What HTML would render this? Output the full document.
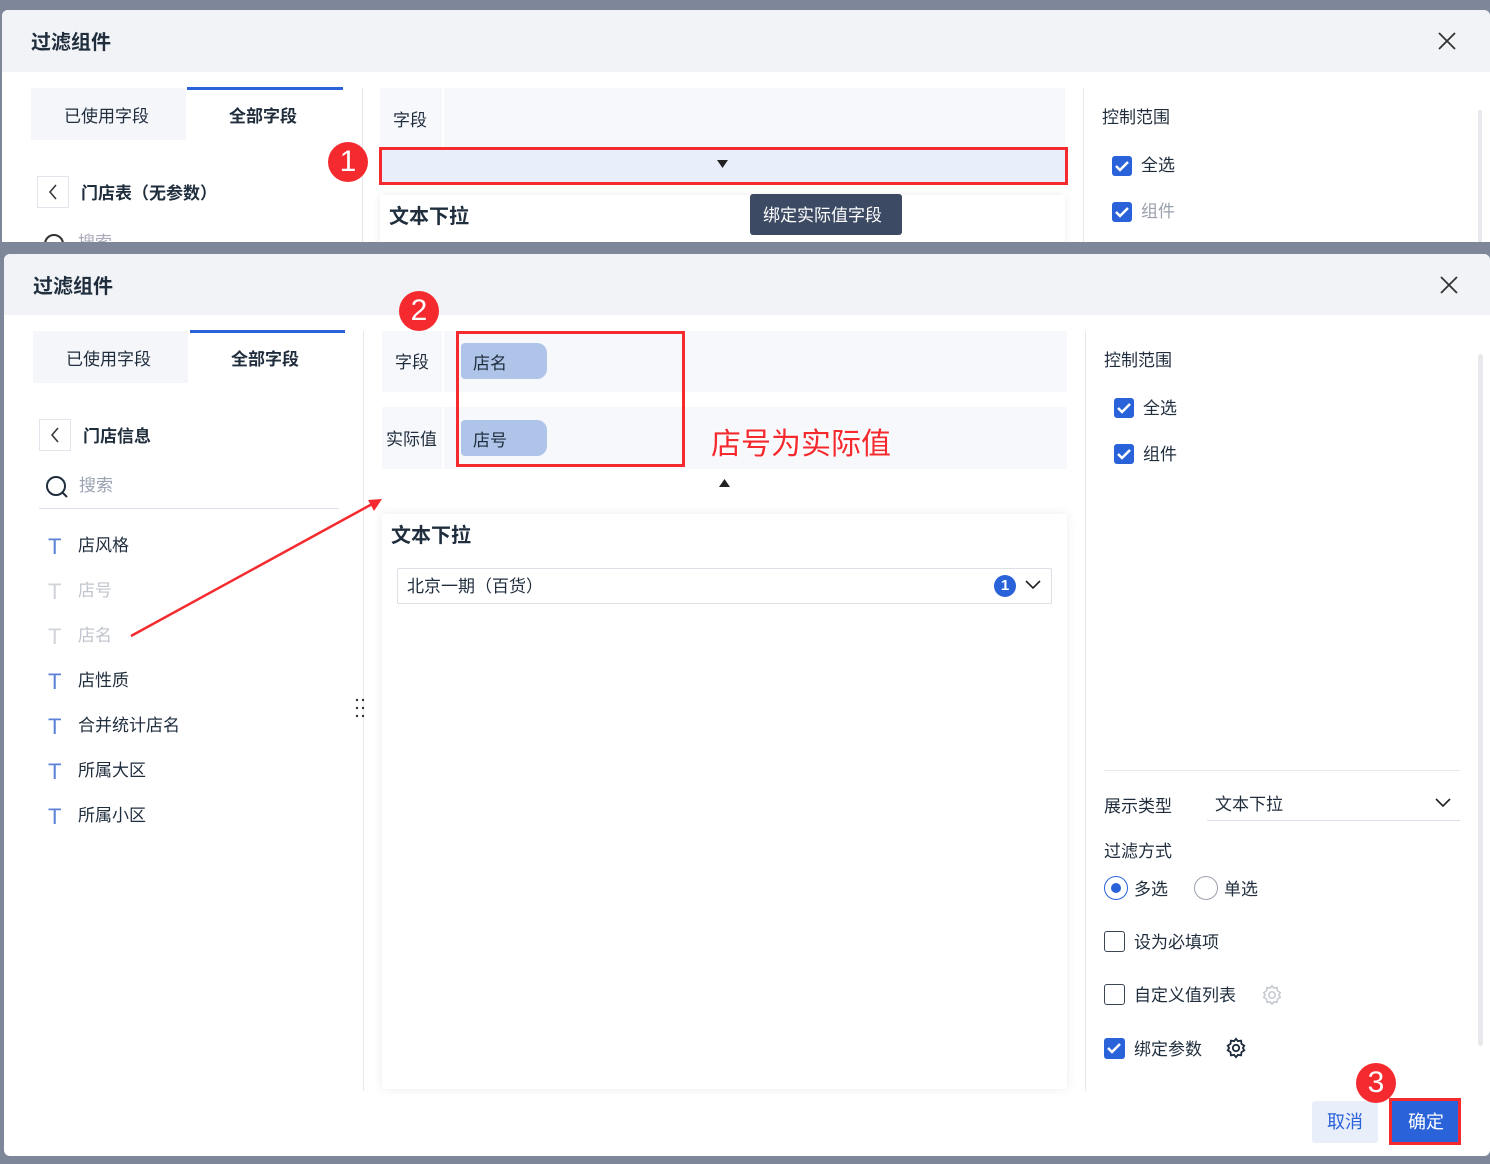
<!DOCTYPE html>
<html><head><meta charset="utf-8"><style>
*{margin:0;padding:0;box-sizing:border-box}
body{width:1490px;height:1164px;position:relative;overflow:hidden;background:#7d8799;font-family:"Liberation Sans","Noto Sans CJK SC",sans-serif;color:#1f2d3d;font-size:17px}
.a{position:absolute}
.t{position:absolute;white-space:nowrap;line-height:1;margin-top:2px}
.cb{position:absolute;width:20px;height:20px;border-radius:3px;background:#2a62d9}
.cb svg{position:absolute;left:2px;top:3px}
.ub{position:absolute;width:21px;height:21px;border:1.5px solid #3a4556;border-radius:3px;background:#fff}
.circ{position:absolute;width:40px;height:40px;border-radius:50%;background:#f52a2f;color:#fff;font-size:30px;text-align:center;line-height:40px}
.T{position:absolute;color:#5b82d6;font-size:22px;line-height:1;margin-top:1px}
</style></head><body>
<div class="a" style="left:2px;top:10px;width:1488px;height:232px;background:#fff;border-radius:6px 6px 0 0;overflow:hidden">
 <div class="a" style="left:0;top:0;width:1488px;height:62px;background:#f2f3f7"></div>
 <div class="t" style="left:29px;top:21px;font-size:20px;font-weight:bold">过滤组件</div>
 <svg class="a" style="left:1436px;top:22px" width="18" height="18"><path d="M1 1L17 17M17 1L1 17" stroke="#333" stroke-width="1.8"/></svg>
 <div class="a" style="left:29px;top:78px;width:155px;height:52px;background:#f5f6fa"></div>
 <div class="a" style="left:185px;top:77px;width:156px;height:3px;background:#2a62d9"></div>
 <div class="t" style="left:62px;top:96px">已使用字段</div>
 <div class="t" style="left:227px;top:96px;font-weight:bold">全部字段</div>
 <div class="a" style="left:360px;top:78px;width:1px;height:160px;background:#e6e8ee"></div>
 <div class="a" style="left:35px;top:166px;width:32px;height:32px;border:1px solid #e2e5ec"></div>
 <svg class="a" style="left:45px;top:174px" width="12" height="16"><path d="M9 1L3 8L9 15" stroke="#333" stroke-width="1.5" fill="none"/></svg>
 <div class="t" style="left:79px;top:173px;font-weight:bold">门店表（无参数）</div>
 <svg class="a" style="left:40px;top:222px" width="26" height="20"><circle cx="12" cy="12" r="9" stroke="#333" stroke-width="2" fill="none"/></svg>
 <div class="t" style="left:76px;top:222px;color:#aab">搜索</div>
 <div class="a" style="left:378px;top:78px;width:685px;height:59px;background:#f7f8fc"></div>
 <div class="a" style="left:440px;top:78px;width:2px;height:59px;background:#fff"></div>
 <div class="t" style="left:391px;top:100px">字段</div>
 <div class="a" style="left:377px;top:137px;width:689px;height:38px;border:3px solid #f52a2f;background:#e8eefa"></div>
 <svg class="a" style="left:715px;top:150px" width="11" height="8"><path d="M0 0H11L5.5 8Z" fill="#222"/></svg>
 <div class="a" style="left:378px;top:185px;width:685px;height:60px;background:#fff;box-shadow:0 0 8px rgba(0,0,0,.08)"></div>
 <div class="t" style="left:387px;top:195px;font-size:20px;font-weight:bold">文本下拉</div>
 <div class="a" style="left:748px;top:184px;width:152px;height:41px;background:#3d4a63;border-radius:3px"></div>
 <div class="t" style="left:761px;top:195px;color:#fff">绑定实际值字段</div>
 <div class="a" style="left:1081px;top:78px;width:1px;height:160px;background:#e6e8ee"></div>
 <div class="t" style="left:1100px;top:97px">控制范围</div>
 <div class="cb" style="left:1110px;top:146px"><svg width="16" height="14"><path d="M2 7L6 11L14 3" stroke="#fff" stroke-width="2.5" fill="none"/></svg></div>
 <div class="t" style="left:1139px;top:145px">全选</div>
 <div class="cb" style="left:1110px;top:192px"><svg width="16" height="14"><path d="M2 7L6 11L14 3" stroke="#fff" stroke-width="2.5" fill="none"/></svg></div>
 <div class="t" style="left:1139px;top:191px;color:#9aa0ac">组件</div>
 <div class="a" style="left:1476px;top:100px;width:4px;height:140px;background:#e8e9ed;border-radius:2px"></div>
</div>
<div class="circ" style="left:328px;top:142px">1</div>

<div class="a" style="left:4px;top:254px;width:1486px;height:902px;background:#fff;border-radius:6px;overflow:hidden">
 <div class="a" style="left:0;top:0;width:1486px;height:61px;background:#f2f3f7"></div>
 <div class="t" style="left:29px;top:21px;font-size:20px;font-weight:bold">过滤组件</div>
 <svg class="a" style="left:1436px;top:22px" width="18" height="18"><path d="M1 1L17 17M17 1L1 17" stroke="#333" stroke-width="1.8"/></svg>
 <div class="a" style="left:29px;top:77px;width:155px;height:52px;background:#f5f6fa"></div>
 <div class="a" style="left:186px;top:76px;width:155px;height:3px;background:#2a62d9"></div>
 <div class="t" style="left:62px;top:95px">已使用字段</div>
 <div class="t" style="left:227px;top:95px;font-weight:bold">全部字段</div>
 <div class="a" style="left:359px;top:77px;width:1px;height:760px;background:#e6e8ee"></div>
 <div class="a" style="left:35px;top:165px;width:32px;height:32px;border:1px solid #e2e5ec"></div>
 <svg class="a" style="left:45px;top:173px" width="12" height="16"><path d="M9 1L3 8L9 15" stroke="#333" stroke-width="1.5" fill="none"/></svg>
 <div class="t" style="left:79px;top:172px;font-weight:bold">门店信息</div>
 <svg class="a" style="left:41px;top:221px" width="26" height="24"><circle cx="11" cy="11" r="9" stroke="#1f2d3d" stroke-width="2" fill="none"/><path d="M17 17L22 22" stroke="#1f2d3d" stroke-width="2"/></svg>
 <div class="t" style="left:75px;top:221px;color:#9aa3b2">搜索</div>
 <div class="a" style="left:35px;top:254px;width:300px;height:1px;background:#dde0e8"></div>
 <div class="T" style="left:44px;top:281px">T</div><div class="t" style="left:74px;top:281px">店风格</div>
 <div class="T" style="left:44px;top:326px;color:#d0d3da">T</div><div class="t" style="left:74px;top:326px;color:#c0c4cc">店号</div>
 <div class="T" style="left:44px;top:371px;color:#d0d3da">T</div><div class="t" style="left:74px;top:371px;color:#c0c4cc">店名</div>
 <div class="T" style="left:44px;top:416px">T</div><div class="t" style="left:74px;top:416px">店性质</div>
 <div class="T" style="left:44px;top:461px">T</div><div class="t" style="left:74px;top:461px">合并统计店名</div>
 <div class="T" style="left:44px;top:506px">T</div><div class="t" style="left:74px;top:506px">所属大区</div>
 <div class="T" style="left:44px;top:551px">T</div><div class="t" style="left:74px;top:551px">所属小区</div>
 <svg class="a" style="left:351px;top:444px" width="10" height="22"><g fill="#333"><circle cx="2" cy="2" r="1.2"/><circle cx="8" cy="2" r="1.2"/><circle cx="2" cy="10" r="1.2"/><circle cx="8" cy="10" r="1.2"/><circle cx="2" cy="18" r="1.2"/><circle cx="8" cy="18" r="1.2"/></g></svg>
 <div class="a" style="left:378px;top:77px;width:685px;height:61px;background:#f7f8fc"></div>
 <div class="a" style="left:438px;top:77px;width:2px;height:61px;background:#fff"></div>
 <div class="t" style="left:391px;top:98px">字段</div>
 <div class="a" style="left:378px;top:153px;width:685px;height:62px;background:#f7f8fc"></div>
 <div class="a" style="left:438px;top:153px;width:2px;height:62px;background:#fff"></div>
 <div class="t" style="left:382px;top:175px">实际值</div>
 <div class="a" style="left:457px;top:89px;width:86px;height:36px;background:#aec4e8;border-radius:4px 10px 10px 4px"></div>
 <div class="t" style="left:469px;top:99px">店名</div>
 <div class="a" style="left:457px;top:166px;width:86px;height:36px;background:#aec4e8;border-radius:4px 10px 10px 4px"></div>
 <div class="t" style="left:469px;top:176px">店号</div>
 <div class="a" style="left:452px;top:77px;width:229px;height:136px;border:3px solid #f52a2f"></div>
 <div class="t" style="left:707px;top:174px;font-size:30px;color:#f52a2f;text-shadow:0 0 4px #fff,0 0 8px #fff">店号为实际值</div>
 <svg class="a" style="left:715px;top:225px" width="11" height="8"><path d="M0 8H11L5.5 0Z" fill="#222"/></svg>
 <div class="a" style="left:378px;top:260px;width:685px;height:575px;background:#fff;box-shadow:0 0 10px rgba(0,0,0,.08)"></div>
 <div class="t" style="left:387px;top:270px;font-size:20px;font-weight:bold">文本下拉</div>
 <div class="a" style="left:393px;top:314px;width:655px;height:36px;border:1px solid #dcdfe6;border-radius:2px"></div>
 <div class="t" style="left:403px;top:322px">北京一期（百货）</div>
 <div class="a" style="left:990px;top:321px;width:22px;height:22px;border-radius:50%;background:#2a62d9;color:#fff;font-size:15px;font-weight:bold;text-align:center;line-height:22px">1</div>
 <svg class="a" style="left:1021px;top:326px" width="16" height="10"><path d="M1 1L8 8L15 1" stroke="#222" stroke-width="1.6" fill="none"/></svg>
 <div class="a" style="left:1081px;top:77px;width:1px;height:760px;background:#e6e8ee"></div>
 <div class="t" style="left:1100px;top:96px">控制范围</div>
 <div class="cb" style="left:1110px;top:144px"><svg width="16" height="14"><path d="M2 7L6 11L14 3" stroke="#fff" stroke-width="2.5" fill="none"/></svg></div>
 <div class="t" style="left:1139px;top:144px">全选</div>
 <div class="cb" style="left:1110px;top:190px"><svg width="16" height="14"><path d="M2 7L6 11L14 3" stroke="#fff" stroke-width="2.5" fill="none"/></svg></div>
 <div class="t" style="left:1139px;top:190px">组件</div>
 <div class="a" style="left:1474px;top:100px;width:5px;height:692px;background:#e8e9ed;border-radius:3px"></div>
 <div class="a" style="left:1100px;top:516px;width:356px;height:1px;background:#e6e8ee"></div>
 <div class="t" style="left:1100px;top:542px">展示类型</div>
 <div class="t" style="left:1211px;top:540px">文本下拉</div>
 <div class="a" style="left:1203px;top:566px;width:253px;height:1px;background:#dde0e8"></div>
 <svg class="a" style="left:1431px;top:544px" width="16" height="10"><path d="M1 1L8 8L15 1" stroke="#222" stroke-width="1.6" fill="none"/></svg>
 <div class="t" style="left:1100px;top:587px">过滤方式</div>
 <div class="a" style="left:1100px;top:622px;width:24px;height:24px;border-radius:50%;border:1.5px solid #2a62d9"></div>
 <div class="a" style="left:1107px;top:629px;width:10px;height:10px;border-radius:50%;background:#2a62d9"></div>
 <div class="t" style="left:1130px;top:625px">多选</div>
 <div class="a" style="left:1190px;top:622px;width:24px;height:24px;border-radius:50%;border:1.5px solid #9aa0ac"></div>
 <div class="t" style="left:1220px;top:625px">单选</div>
 <div class="ub" style="left:1100px;top:677px"></div>
 <div class="t" style="left:1130px;top:678px">设为必填项</div>
 <div class="ub" style="left:1100px;top:730px"></div>
 <div class="t" style="left:1130px;top:731px">自定义值列表</div>
 <svg class="a" style="left:1257px;top:730px" width="22" height="22" viewBox="0 0 24 24"><path d="M12 2L14 4.5L17.5 4L18 7.5L21 9.5L19.5 12L21 14.5L18 16.5L17.5 20L14 19.5L12 22L10 19.5L6.5 20L6 16.5L3 14.5L4.5 12L3 9.5L6 7.5L6.5 4L10 4.5Z" stroke="#c8ccd4" stroke-width="1.8" fill="none"/><circle cx="12" cy="12" r="3.5" stroke="#c8ccd4" stroke-width="1.8" fill="none"/></svg>
 <div class="cb" style="left:1100px;top:784px;width:21px;height:21px"><svg width="16" height="14"><path d="M2 7L6 11L14 3" stroke="#fff" stroke-width="2.5" fill="none"/></svg></div>
 <div class="t" style="left:1130px;top:785px">绑定参数</div>
 <svg class="a" style="left:1221px;top:783px" width="22" height="22" viewBox="0 0 24 24"><path d="M12 2L14 4.5L17.5 4L18 7.5L21 9.5L19.5 12L21 14.5L18 16.5L17.5 20L14 19.5L12 22L10 19.5L6.5 20L6 16.5L3 14.5L4.5 12L3 9.5L6 7.5L6.5 4L10 4.5Z" stroke="#1f2d3d" stroke-width="2" fill="none"/><circle cx="12" cy="12" r="3.5" stroke="#1f2d3d" stroke-width="2" fill="none"/></svg>
 <div class="a" style="left:1308px;top:847px;width:66px;height:42px;background:#e8eefa;border-radius:3px"></div>
 <div class="t" style="left:1323px;top:857px;color:#2a62d9;font-size:18px">取消</div>
 <div class="a" style="left:1385px;top:844px;width:72px;height:47px;border:3px solid #f52a2f;background:#2a62d9"></div>
 <div class="t" style="left:1404px;top:857px;color:#fff;font-size:18px">确定</div>
</div>
<div class="circ" style="left:399px;top:291px">2</div>
<div class="circ" style="left:1356px;top:1063px">3</div>
<svg class="a" style="left:0;top:0" width="1490" height="1164"><path d="M131 636L374 503" stroke="#f52a2f" stroke-width="2.5"/><path d="M382 499L368 500L374 511Z" fill="#f52a2f"/></svg>
</body></html>
